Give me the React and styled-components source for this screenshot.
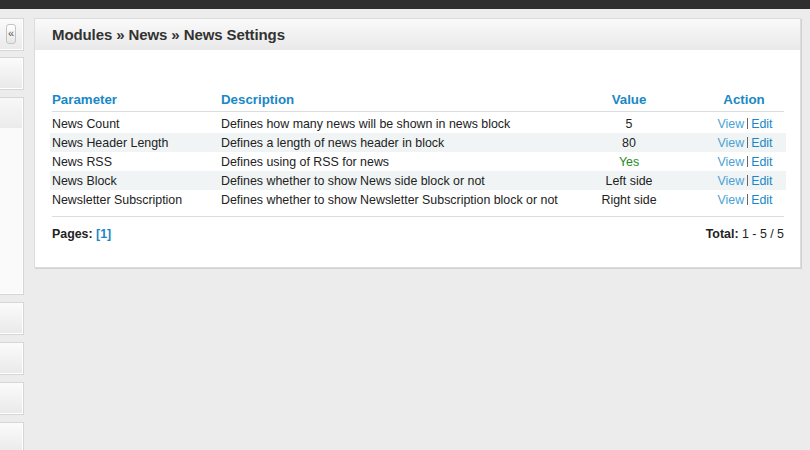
import React from 'react';
import styled, {createGlobalStyle} from 'styled-components';

const GlobalStyle=createGlobalStyle`
  html,body{
    margin:0;
    padding:0;
    background:#ebeceb;
    font-family:"Liberation Sans",Arial,sans-serif;
    font-size:12.4px;
    color:#222;
    overflow:hidden;
  }
`;

const rows=[
  {name:'News Count',desc:'Defines how many news will be shown in news block',value:'5'},
  {name:'News Header Length',desc:'Defines a length of news header in block',value:'80'},
  {name:'News RSS',desc:'Defines using of RSS for news',value:'Yes',yes:true},
  {name:'News Block',desc:'Defines whether to show News side block or not',value:'Left side'},
  {name:'Newsletter Subscription',desc:'Defines whether to show Newsletter Subscription block or not',value:'Right side'},
];

const sidePanels=[33,33,198,33,33,33,33];

function App() {
  return (
    <Page>
      <GlobalStyle/>
      <TopBar/>
      <Layout>
        <Sidebar>
          {sidePanels.map((h,i)=>(
            <SidePanel key={i} $h={h} $tall={h>100}>
              {i===0&&<Collapse>«</Collapse>}
            </SidePanel>
          ))}
        </Sidebar>
        <Panel>
          <PanelHeader>Modules » News » News Settings</PanelHeader>
          <PanelBody>
            <HeadRow>
              <Th>Parameter</Th>
              <Th>Description</Th>
              <Th $center>Value</Th>
              <Th $center>Action</Th>
            </HeadRow>
            <Rows>
              {rows.map((r,i)=>(
                <Row key={r.name} $odd={i%2===1}>
                  <Cell>{r.name}</Cell>
                  <Cell>{r.desc}</Cell>
                  <Cell $center $green={r.yes}>{r.value}</Cell>
                  <Actions>
                    <ViewLink>View</ViewLink>
                    <Sep/>
                    <EditLink>Edit</EditLink>
                  </Actions>
                </Row>
              ))}
            </Rows>
            <Footer>
              <span><b>Pages:</b> <PageLink>[1]</PageLink></span>
              <span><b>Total:</b> 1 - 5 / 5</span>
            </Footer>
          </PanelBody>
        </Panel>
      </Layout>
    </Page>
  );
}

const Page=styled.div`
  width:810px;
  height:450px;
  overflow:hidden;
`;

const TopBar=styled.div`
  height:9px;
  background:#2f2f2f;
`;

const Layout=styled.div`
  display:flex;
  align-items:flex-start;
  gap:10px;
  padding-top:9px;
`;

const Sidebar=styled.div`
  width:24px;
  flex:none;
  display:flex;
  flex-direction:column;
  gap:7px;
`;

const SidePanel=styled.div`
  position:relative;
  box-sizing:border-box;
  height:${p=>p.$h}px;
  border:1px solid #d6d6d6;
  border-left:none;
  box-shadow:inset -1px -1px 0 #fff;
  background:${p=>p.$tall
    ?'linear-gradient(#f8f8f8,#ebebeb 30px,#fafafa 30px)'
    :'linear-gradient(#fbfbfb,#e9e9e9)'};
  &:nth-child(2){margin-top:-1px;}
`;

const Collapse=styled.div`
  position:absolute;
  left:6px;
  top:5px;
  width:10px;
  height:20px;
  box-sizing:border-box;
  border:1px solid #c4c4c4;
  border-radius:3px;
  background:linear-gradient(#ffffff,#e6e6e6);
  color:#555;
  font-size:11px;
  line-height:17px;
  text-align:center;
`;

const Panel=styled.div`
  flex:1;
  margin-right:9px;
  background:#fff;
  border:1px solid #dcdcdc;
  box-shadow:1px 1px 0 #d2d2d2;
`;

const PanelHeader=styled.div`
  height:31px;
  padding-left:17px;
  background:linear-gradient(#fafafa,#e9e9e9);
  font-size:15px;
  letter-spacing:-0.1px;
  font-weight:bold;
  color:#333;
  line-height:32px;
`;

const PanelBody=styled.div`
  padding:39px 14px 25px 15px;
`;

const grid=`
  display:grid;
  grid-template-columns:169px 335px 150px 1fr;
`;

const HeadRow=styled.div`
  ${grid}
  height:21px;
  padding-bottom:1px;
  box-sizing:border-box;
  align-items:center;
  margin:0 2px;
  border-bottom:1px solid #dddddd;
  grid-template-columns:169px 333px 150px 1fr;
  height:23px;
`;

const Th=styled.div`
  font-size:13.3px;
  font-weight:bold;
  color:#1a88c6;
  text-align:${p=>p.$center?'center':'left'};
`;

const Rows=styled.div`
  padding-top:2px;
`;

const Row=styled.div`
  ${grid}
  height:19px;
  align-items:center;
  background:${p=>p.$odd?'#f0f4f4':'transparent'};
`;

const Cell=styled.div`
  padding-left:${p=>p.$center?0:2}px;
  text-align:${p=>p.$center?'center':'left'};
  color:${p=>p.$green?'#1e8b1e':'#222'};
  white-space:nowrap;
`;

const Actions=styled.div`
  display:flex;
  justify-content:center;
  align-items:center;
`;

const ViewLink=styled.span`
  color:#4aa3d6;
`;

const EditLink=styled.span`
  color:#1a88c6;
`;

const Sep=styled.span`
  width:1px;
  height:11px;
  margin:0 3px;
  background:#666;
`;

const Footer=styled.div`
  display:flex;
  justify-content:space-between;
  margin:7px 2px 0;
  padding-top:10px;
  border-top:1px solid #dddddd;
  line-height:15px;
`;

const PageLink=styled.b`
  color:#1a88c6;
`;

export default App;
